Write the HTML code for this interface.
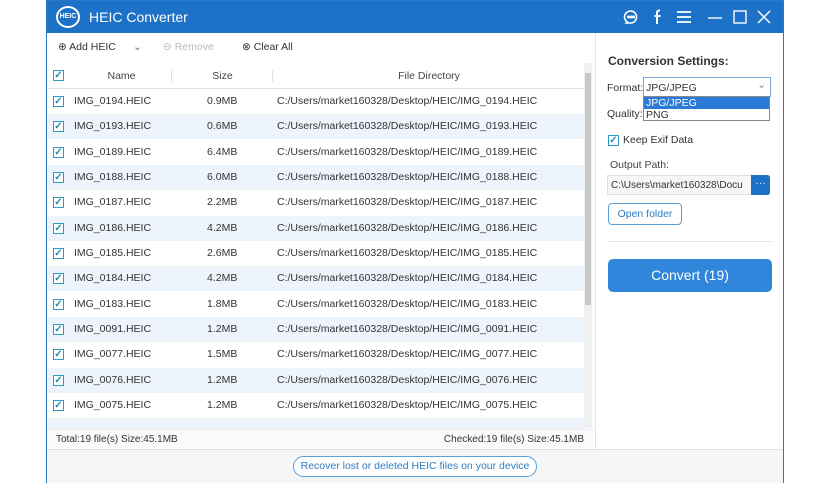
<!DOCTYPE html>
<html><head><meta charset="utf-8"><style>
*{box-sizing:border-box;margin:0;padding:0}
body{width:836px;height:484px;background:#fff;font-family:"Liberation Sans",sans-serif;font-size:10.5px;color:#333;position:relative;overflow:hidden}
.win{position:absolute;left:46px;top:0;width:738px;height:483px;border:1px solid #2a78c8;background:#fff}
.title{position:absolute;left:0;top:0;width:736px;height:32px;background:#1d72c8;color:#fff}
.title .t{position:absolute;left:42px;top:8px;font-size:14px}
.logo{position:absolute;left:9px;top:5px;width:24px;height:22px;border:2px solid #fff;border-radius:50%;font-size:7px;font-weight:bold;text-align:center;line-height:18px}
.title svg{position:absolute;top:8px}
.tool{position:absolute;left:0;top:32px;width:547px;height:28px}
.tool span{position:absolute;top:8px}
.hdr{position:absolute;left:0;top:62px;width:537px;height:26px;border-bottom:1px solid #e3e3e3;background:#fff}
.hdr div{position:absolute;top:7px;text-align:center;color:#444}
.row{position:absolute;left:0;width:537px;height:25px;line-height:25px}
.row.a{background:#eef4fb}
.cb{position:absolute;left:6px;top:7px;width:11px;height:11px;border:1px solid #2a9dc0;background:#fff;color:#1f8cb8;font-size:10px;line-height:9px;text-align:center;font-weight:bold}
.n{position:absolute;left:27px}.s{position:absolute;left:160px}.d{position:absolute;left:230px}
.scroll{position:absolute;left:537px;top:62px;width:8px;height:365px;background:#f0f0f0}
.foot{position:absolute;left:0;top:428px;width:547px;height:20px;background:#fafafa;border-top:1px solid #eee;font-size:10px}
.bot{position:absolute;left:0;top:448px;width:736px;height:34px;background:#f4f6f8;border-top:1px solid #e0e0e0}
.rec{position:absolute;left:246px;top:6px;width:244px;height:21px;border:1px solid #5aa0d8;border-radius:11px;color:#2e7cc3;font-size:10.5px;text-align:center;line-height:19px;background:#fff}
.rp{position:absolute;left:548px;top:32px;width:188px;height:416px;border-left:1px solid #e5e5e5;background:#fff}
</style></head><body>
<div class="win">
<div class="title"><div class="logo">HEIC</div><div class="t">HEIC Converter</div>
<svg style="left:576px" width="16" height="16" viewBox="0 0 16 16" fill="none" stroke="#fff" stroke-width="1.6"><path d="M4.5 13.2A6 6 0 1 1 8 14H3.5z"/><circle cx="5.5" cy="8" r=".7" fill="#fff"/><circle cx="8" cy="8" r=".7" fill="#fff"/><circle cx="10.5" cy="8" r=".7" fill="#fff"/></svg>
<svg style="left:605px" width="12" height="16" viewBox="0 0 12 16" fill="none" stroke="#fff" stroke-width="2"><path d="M8 1.5H7a2 2 0 0 0-2 2V15M2.5 7h6"/></svg>
<svg style="left:629px" width="16" height="16" viewBox="0 0 16 16" stroke="#fff" stroke-width="1.8"><path d="M1 3h14M1 8h14M1 13h14"/></svg>
<svg style="left:660px" width="16" height="16" viewBox="0 0 16 16" stroke="#fff" stroke-width="1.4"><path d="M1 9h14"/></svg>
<svg style="left:685px" width="16" height="16" viewBox="0 0 16 16" fill="none" stroke="#fff" stroke-width="1.4"><rect x="2" y="2" width="12" height="12"/></svg>
<svg style="left:709px" width="16" height="16" viewBox="0 0 16 16" stroke="#fff" stroke-width="1.4"><path d="M2 2l12 12M14 2L2 14"/></svg>
</div>
<div class="tool"><span style="left:11px;color:#333">⊕ Add HEIC</span><span style="left:86px;color:#777">⌄</span><span style="left:116px;color:#bbb">⊖ Remove</span><span style="left:195px">⊗ Clear All</span></div>
<div class="hdr"><span class="cb" style="top:7px">✓</span><div style="left:25px;width:100px;border-right:1px solid #e3e3e3">Name</div><div style="left:126px;width:100px;border-right:1px solid #e3e3e3">Size</div><div style="left:227px;width:310px">File Directory</div></div>
<div class="row" style="top:88px"><span class="cb">✓</span><span class="n">IMG_0194.HEIC</span><span class="s">0.9MB</span><span class="d">C:/Users/market160328/Desktop/HEIC/IMG_0194.HEIC</span></div>
<div class="row a" style="top:113px"><span class="cb">✓</span><span class="n">IMG_0193.HEIC</span><span class="s">0.6MB</span><span class="d">C:/Users/market160328/Desktop/HEIC/IMG_0193.HEIC</span></div>
<div class="row" style="top:139px"><span class="cb">✓</span><span class="n">IMG_0189.HEIC</span><span class="s">6.4MB</span><span class="d">C:/Users/market160328/Desktop/HEIC/IMG_0189.HEIC</span></div>
<div class="row a" style="top:164px"><span class="cb">✓</span><span class="n">IMG_0188.HEIC</span><span class="s">6.0MB</span><span class="d">C:/Users/market160328/Desktop/HEIC/IMG_0188.HEIC</span></div>
<div class="row" style="top:189px"><span class="cb">✓</span><span class="n">IMG_0187.HEIC</span><span class="s">2.2MB</span><span class="d">C:/Users/market160328/Desktop/HEIC/IMG_0187.HEIC</span></div>
<div class="row a" style="top:215px"><span class="cb">✓</span><span class="n">IMG_0186.HEIC</span><span class="s">4.2MB</span><span class="d">C:/Users/market160328/Desktop/HEIC/IMG_0186.HEIC</span></div>
<div class="row" style="top:240px"><span class="cb">✓</span><span class="n">IMG_0185.HEIC</span><span class="s">2.6MB</span><span class="d">C:/Users/market160328/Desktop/HEIC/IMG_0185.HEIC</span></div>
<div class="row a" style="top:265px"><span class="cb">✓</span><span class="n">IMG_0184.HEIC</span><span class="s">4.2MB</span><span class="d">C:/Users/market160328/Desktop/HEIC/IMG_0184.HEIC</span></div>
<div class="row" style="top:291px"><span class="cb">✓</span><span class="n">IMG_0183.HEIC</span><span class="s">1.8MB</span><span class="d">C:/Users/market160328/Desktop/HEIC/IMG_0183.HEIC</span></div>
<div class="row a" style="top:316px"><span class="cb">✓</span><span class="n">IMG_0091.HEIC</span><span class="s">1.2MB</span><span class="d">C:/Users/market160328/Desktop/HEIC/IMG_0091.HEIC</span></div>
<div class="row" style="top:341px"><span class="cb">✓</span><span class="n">IMG_0077.HEIC</span><span class="s">1.5MB</span><span class="d">C:/Users/market160328/Desktop/HEIC/IMG_0077.HEIC</span></div>
<div class="row a" style="top:367px"><span class="cb">✓</span><span class="n">IMG_0076.HEIC</span><span class="s">1.2MB</span><span class="d">C:/Users/market160328/Desktop/HEIC/IMG_0076.HEIC</span></div>
<div class="row" style="top:392px"><span class="cb">✓</span><span class="n">IMG_0075.HEIC</span><span class="s">1.2MB</span><span class="d">C:/Users/market160328/Desktop/HEIC/IMG_0075.HEIC</span></div>
<div class="row a" style="top:417px;height:11px"></div>
<div class="scroll"><div style="position:absolute;left:1px;top:10px;width:6px;height:232px;background:#c8c8c8"></div></div>
<div class="foot"><span style="position:absolute;left:9px;top:4px">Total:19 file(s) Size:45.1MB</span><span style="position:absolute;right:10px;top:4px">Checked:19 file(s) Size:45.1MB</span></div>
<div class="rp">
<div style="position:absolute;left:12px;top:21px;font-weight:bold;font-size:12px;color:#333">Conversion Settings:</div>
<div style="position:absolute;left:11px;top:49px">Format:</div>
<div style="position:absolute;left:47px;top:44px;width:128px;height:20px;border:1px solid #7aa7d6;padding:4px 2px">JPG/JPEG<span style="position:absolute;right:4px;top:1px;color:#888">⌄</span></div>
<div style="position:absolute;left:11px;top:75px">Quality:</div>
<div style="position:absolute;left:47px;top:63px;width:127px;height:25px;border:1px solid #888;background:#fff"><div style="background:#2b7ad6;color:#fff;height:12px;line-height:12px;padding-left:2px">JPG/JPEG</div><div style="padding-left:2px;line-height:12px">PNG</div></div>
<span class="cb" style="left:12px;top:102px">✓</span><div style="position:absolute;left:27px;top:101px">Keep Exif Data</div>
<div style="position:absolute;left:14px;top:126px;color:#444">Output Path:</div>
<div style="position:absolute;left:11px;top:142px;width:163px;height:20px;border:1px solid #ddd;background:#f6f6f6;padding:4px 3px;overflow:hidden;white-space:nowrap;font-size:10px">C:\Users\market160328\Docu</div>
<div style="position:absolute;left:155px;top:142px;width:19px;height:20px;background:#1d72c8;color:#fff;text-align:center;line-height:16px;border-radius:0 3px 3px 0">···</div>
<div style="position:absolute;left:12px;top:170px;width:74px;height:22px;border:1px solid #5aa0d8;border-radius:4px;color:#2e7cc3;text-align:center;line-height:20px">Open folder</div>
<div style="position:absolute;left:12px;top:208px;width:164px;height:1px;background:#e5e5e5"></div>
<div style="position:absolute;left:12px;top:226px;width:164px;height:33px;background:#2f86db;border-radius:5px;color:#fff;font-size:14px;text-align:center;line-height:33px">Convert (19)</div>
</div>
<div class="bot"><div class="rec">Recover lost or deleted HEIC files on your device</div></div>
</div>
</body></html>
